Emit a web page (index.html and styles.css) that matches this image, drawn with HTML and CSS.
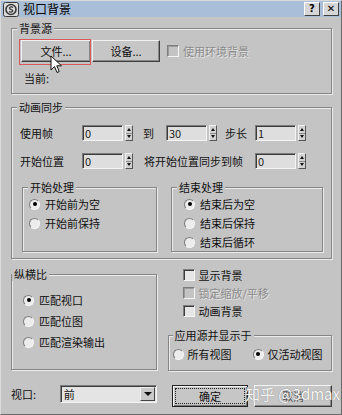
FILE: index.html
```html
<!DOCTYPE html>
<html lang="zh">
<head>
    <meta charset="UTF-8">
    <meta name="viewport" content="width=device-width, initial-scale=1.0">
    <title>视口背景</title>
    <link rel="stylesheet" href="styles.css">
</head>
<body>

<div class="window">
    <!-- barra de título -->
    <div class="titlebar">
        <svg class="app-icon" width="16" height="15" viewBox="0 0 16 15">
            <rect x="0.5" y="0.5" width="15" height="14" rx="2" fill="#dcdcdc" stroke="#3a3a3a"/>
            <circle cx="8" cy="7.5" r="5" fill="none" stroke="#3a3a3a" stroke-width="1.6"/>
            <path d="M10 5.5 C9 4.5 6.5 4.8 6.5 6.3 C6.5 7.8 9.8 7.2 9.8 8.8 C9.8 10.3 7 10.5 6 9.5" fill="none" stroke="#3a3a3a" stroke-width="1.3"/>
        </svg>
        <span class="title">视口背景</span>
        <div class="caption-buttons">
            <span class="cap-btn">?</span>
            <span class="cap-btn">✕</span>
        </div>
    </div>

    <div class="dialog">
        <!-- Fonte do fundo -->
        <div class="group source">
            <span class="group-title">背景源</span>
            <div class="row">
                <button class="btn btn-file">文件...</button>
                <button class="btn btn-device">设备...</button>
                <label class="check env disabled"><span class="box"></span>使用环境背景</label>
            </div>
            <div class="current">当前:</div>
            <div class="highlight"></div>
            <svg class="cursor" width="13" height="19" viewBox="0 0 13 19">
                <path d="M1 1 L1 15 L4.5 11.5 L7 17.5 L9.2 16.6 L6.8 10.8 L11.5 10.8 Z" fill="#fff" stroke="#111" stroke-width="1"/>
            </svg>
        </div>

        <!-- Sincronização da animação -->
        <div class="group anim">
            <span class="group-title">动画同步</span>
            <div class="field-row">
                <span class="field-label">使用帧</span>
                <input class="num" type="text" value="0"><span class="spin"><i class="up"></i><i class="down"></i></span>
                <span class="sep sep-to">到</span>
                <input class="num" type="text" value="30"><span class="spin"><i class="up"></i><i class="down"></i></span>
                <span class="sep sep-step">步长</span>
                <input class="num" type="text" value="1"><span class="spin"><i class="up"></i><i class="down"></i></span>
            </div>
            <div class="field-row second">
                <span class="field-label">开始位置</span>
                <input class="num" type="text" value="0"><span class="spin"><i class="up"></i><i class="down"></i></span>
                <span class="sep sep-sync">将开始位置同步到帧</span>
                <input class="num" type="text" value="0"><span class="spin"><i class="up"></i><i class="down"></i></span>
            </div>
            <div class="subgroups">
                <div class="group sub sub-start">
                    <span class="group-title">开始处理</span>
                    <div class="radio-list">
                        <label class="opt"><span class="radio checked"></span>开始前为空</label>
                        <label class="opt"><span class="radio"></span>开始前保持</label>
                    </div>
                </div>
                <div class="group sub sub-end">
                    <span class="group-title">结束处理</span>
                    <div class="radio-list">
                        <label class="opt"><span class="radio checked"></span>结束后为空</label>
                        <label class="opt"><span class="radio"></span>结束后保持</label>
                        <label class="opt"><span class="radio"></span>结束后循环</label>
                    </div>
                </div>
            </div>
        </div>

        <div class="lower">
            <div class="group aspect">
                <span class="group-title">纵横比</span>
                <div class="radio-list">
                    <label class="opt"><span class="radio checked"></span>匹配视口</label>
                    <label class="opt"><span class="radio"></span>匹配位图</label>
                    <label class="opt"><span class="radio"></span>匹配渲染输出</label>
                </div>
            </div>
            <div class="right-col">
                <label class="check"><span class="box"></span>显示背景</label>
                <label class="check disabled"><span class="box"></span>锁定缩放/平移</label>
                <label class="check"><span class="box"></span>动画背景</label>
                <div class="group apply">
                    <span class="group-title">应用源并显示于</span>
                    <div class="apply-row">
                        <label class="opt all"><span class="radio"></span>所有视图</label>
                        <label class="opt"><span class="radio checked"></span>仅活动视图</label>
                    </div>
                </div>
            </div>
        </div>

        <div class="bottom">
            <span class="vp-label">视口:</span>
            <div class="select"><span>前</span><span class="arrow"></span></div>
            <button class="btn btn-ok">确定</button>
            <button class="btn btn-cancel">取消</button>
        </div>
    </div>

    <div class="watermark">知乎 @3dmax</div>
</div>

</body>
</html>
```

FILE: styles.css
```css
body {
    margin: 0;
    font-family: "Noto Sans CJK SC", "DejaVu Sans", sans-serif;
    font-size: 11px;
    line-height: 14px;
    color: #111;
    background: #c4c4c4;
}

.window {
    position: relative;
    width: 342px;
    height: 415px;
    box-sizing: border-box;
    border: 1px solid #6a6a6a;
    border-top-color: #dadada;
    border-left-color: #dadada;
    background: #c4c4c4;
}

/* barra de título */
.titlebar {
    height: 16px;
    background: #a9bed8;
    display: flex;
    align-items: center;
    padding: 0 2px;
}

.app-icon {
    margin-right: 4px;
}

.title {
    font-size: 12px;
    color: #000;
}

.caption-buttons {
    margin-left: auto;
    display: flex;
    gap: 3px;
}

.cap-btn {
    width: 16px;
    height: 14px;
    box-sizing: border-box;
    background: #d6d6d6;
    border: 1px solid #fff;
    border-right-color: #404040;
    border-bottom-color: #404040;
    font-family: "DejaVu Sans", sans-serif;
    font-weight: bold;
    font-size: 10px;
    line-height: 12px;
    text-align: center;
    color: #000;
}

.dialog {
    padding: 11px 9px 0 10px;
}

/* caixas de grupo */
.group {
    position: relative;
    box-sizing: border-box;
    border: 1px solid #858585;
    box-shadow: inset 1px 1px 0 #ececec, 1px 1px 0 #ececec;
}

.group-title {
    position: absolute;
    top: -8px;
    left: 5px;
    padding: 0 2px;
    background: #c4c4c4;
    color: #111;
}

.source {
    height: 66px;
    padding: 11px 0 0 9px;
}

.row {
    display: flex;
    align-items: center;
}

.btn {
    box-sizing: border-box;
    height: 22px;
    padding: 0;
    font-family: inherit;
    font-size: 11px;
    color: #111;
    background: #c6c6c6;
    border: 1px solid #f2f2f2;
    border-right-color: #3e3e3e;
    border-bottom-color: #3e3e3e;
    box-shadow: inset -1px -1px 0 #888;
}

.btn-file {
    width: 70px;
}

.btn-device {
    width: 68px;
    margin-left: 1px;
}

.check {
    display: flex;
    align-items: center;
    height: 18px;
}

.check .box {
    width: 12px;
    height: 12px;
    box-sizing: border-box;
    margin-right: 4px;
    background: #e6e6e6;
    border: 1px solid #7c7c7c;
    border-right-color: #f4f4f4;
    border-bottom-color: #f4f4f4;
    box-shadow: inset 1px 1px 0 #3c3c3c;
}

.check.disabled {
    color: #8a8a8a;
    text-shadow: 1px 1px 0 #e4e4e4;
}

.check.disabled .box {
    background: #c4c4c4;
    box-shadow: inset 1px 1px 0 #9a9a9a;
}

.env {
    margin-left: 7px;
}

.current {
    margin: 9px 0 0 3px;
}

.highlight {
    position: absolute;
    left: 7px;
    top: 10px;
    width: 72px;
    height: 26px;
    box-sizing: border-box;
    border: 1px solid #d9585a;
}

.cursor {
    position: absolute;
    left: 38px;
    top: 26px;
}

/* sincronização */
.anim {
    height: 152px;
    margin-top: 13px;
    padding: 17px 0 0 8px;
}

.field-row {
    display: flex;
    align-items: center;
    height: 16px;
}

.field-row.second {
    margin-top: 12px;
}

.field-label {
    width: 62px;
}

.num {
    width: 41px;
    height: 16px;
    box-sizing: border-box;
    margin: 0;
    padding: 0 2px;
    font-family: inherit;
    font-size: 11px;
    color: #222;
    background: #dedede;
    border: 1px solid #7c7c7c;
    border-right-color: #f4f4f4;
    border-bottom-color: #f4f4f4;
    box-shadow: inset 1px 1px 0 #3c3c3c;
}

.spin {
    display: flex;
    flex-direction: column;
    width: 8px;
    height: 16px;
    margin-left: 2px;
    box-sizing: border-box;
    background: #d2d2d2;
    border: 1px solid #f0f0f0;
    border-right-color: #555;
    border-bottom-color: #555;
}

.spin i {
    flex: 1;
    position: relative;
}

.spin i::after {
    content: "";
    position: absolute;
    left: 1px;
    border-left: 2px solid transparent;
    border-right: 2px solid transparent;
}

.spin .up::after {
    top: 2px;
    border-bottom: 3px solid #111;
}

.spin .down::after {
    top: 1px;
    border-top: 3px solid #111;
}

.spin .up {
    border-bottom: 1px solid #8a8a8a;
}

.sep {
    box-sizing: border-box;
}

.sep-to {
    width: 33px;
    padding-left: 10px;
}

.sep-step {
    width: 38px;
    padding-left: 8px;
}

.sep-sync {
    width: 122px;
    padding-left: 11px;
}

.subgroups {
    display: flex;
    gap: 14px;
    margin: 18px 0 0 2px;
}

.sub {
    height: 65px;
    padding-top: 7px;
}

.sub-start {
    width: 135px;
    padding-left: 6px;
}

.sub-end {
    width: 152px;
    padding-left: 12px;
}

.radio-list {
    display: flex;
    flex-direction: column;
    gap: 1px;
}

.opt {
    display: flex;
    align-items: center;
    height: 18px;
}

.radio {
    position: relative;
    width: 11px;
    height: 11px;
    box-sizing: border-box;
    margin-right: 5px;
    border-radius: 50%;
    background: #ececec;
    border: 1px solid #7c7c7c;
    border-right-color: #f6f6f6;
    border-bottom-color: #f6f6f6;
}

.radio.checked::after {
    content: "";
    position: absolute;
    left: 2.5px;
    top: 2.5px;
    width: 4px;
    height: 4px;
    border-radius: 50%;
    background: #000;
}

/* parte de baixo */
.lower {
    display: flex;
    align-items: flex-start;
    gap: 11px;
    margin-top: 7px;
    height: 105px;
}

.aspect {
    width: 146px;
    height: 96px;
    margin-top: 8px;
    padding: 16px 0 0 11px;
}

.aspect .group-title {
    left: 0;
}

.aspect .radio-list {
    gap: 3px;
}

.right-col {
    width: 165px;
}

.right-col .check {
    margin-left: 15px;
}

.apply {
    height: 36px;
    margin-top: 15px;
    padding: 9px 0 0 4px;
}

.apply .group-title {
    left: 4px;
}

.apply-row {
    display: flex;
}

.apply-row .opt .radio {
    margin-right: 4px;
}

.apply-row .all {
    width: 80px;
}

.bottom {
    display: flex;
    align-items: flex-start;
    margin-top: 14px;
}

.vp-label {
    width: 49px;
    line-height: 18px;
}

.select {
    display: flex;
    align-items: center;
    width: 97px;
    height: 18px;
    box-sizing: border-box;
    padding-left: 3px;
    background: #e4e4e4;
    border: 1px solid #7c7c7c;
    border-right-color: #f4f4f4;
    border-bottom-color: #f4f4f4;
    box-shadow: inset 1px 1px 0 #3c3c3c;
}

.select .arrow {
    position: relative;
    margin-left: auto;
    width: 15px;
    height: 14px;
    margin-right: 1px;
    box-sizing: border-box;
    background: #cacaca;
    border: 1px solid #f0f0f0;
    border-right-color: #444;
    border-bottom-color: #444;
}

.select .arrow::after {
    content: "";
    position: absolute;
    left: 3px;
    top: 4px;
    border-left: 4px solid transparent;
    border-right: 4px solid transparent;
    border-top: 4px solid #111;
}

.btn-ok {
    width: 77px;
    margin-left: 15px;
    border: 1px solid #222;
    box-shadow: inset 1px 1px 0 #f2f2f2, inset -1px -1px 0 #777;
    outline: 1px dotted #222;
    outline-offset: -4px;
}

.btn-cancel {
    width: 78px;
    margin-left: 6px;
    color: #555;
}

.watermark {
    position: absolute;
    left: 244px;
    top: 383px;
    font-size: 15px;
    line-height: 20px;
    color: rgba(255, 255, 255, 0.95);
    text-shadow: 0 0 1px #777;
}
```
